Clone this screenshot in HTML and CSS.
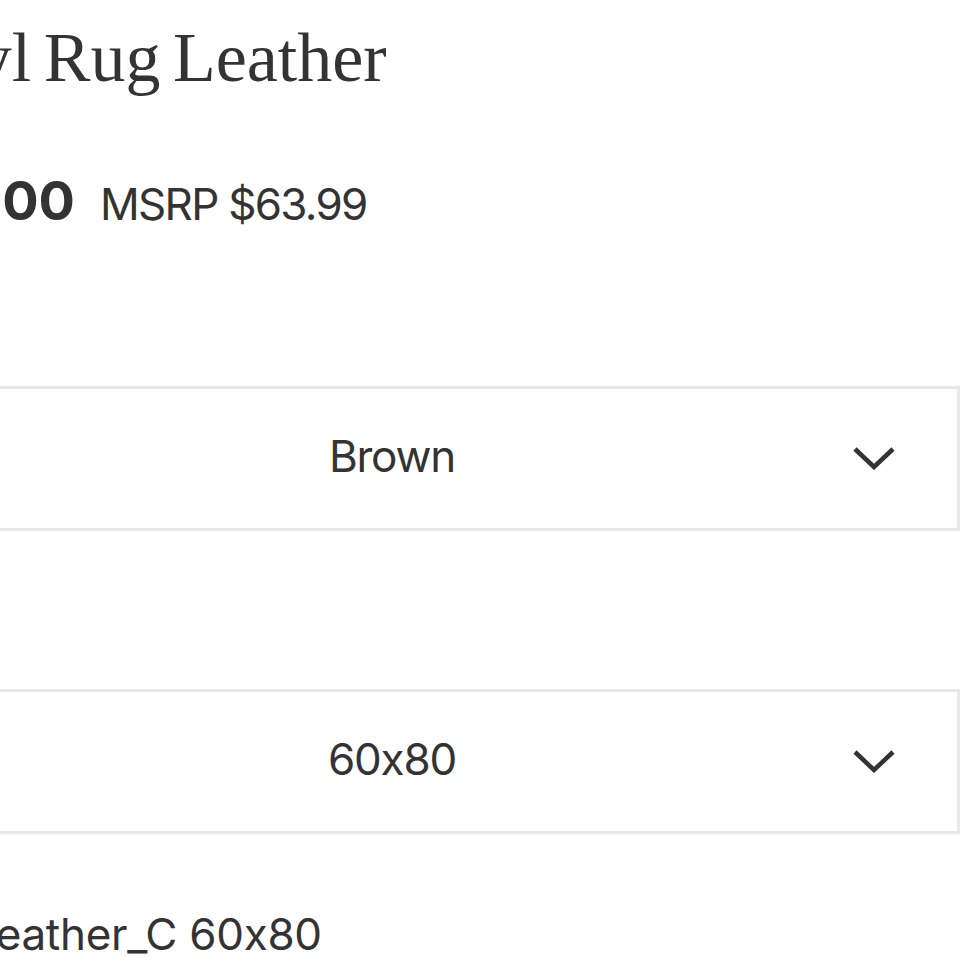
FILE: index.html
```html
<!DOCTYPE html>
<html lang="en">
<head>
<meta charset="utf-8">
<title>Vinyl Rug Leather</title>
<link rel="stylesheet" href="styles.css">
</head>
<body>
<main class="page">
  <h1 class="title">Vinyl Rug Leather</h1>
  <div class="price-row">
    <span class="price">$39.00</span>
    <span class="msrp">MSRP $63.99</span>
  </div>
  <div class="option">
    <div class="select">
      <span class="select-value">Brown</span>
      <svg class="chevron" viewBox="0 0 42 24" width="42" height="24" aria-hidden="true"><polyline points="2,3 21,21 40,3" fill="none" stroke="#333" stroke-width="4.5"/></svg>
    </div>
  </div>
  <div class="option option-second">
    <div class="select">
      <span class="select-value">60x80</span>
      <svg class="chevron" viewBox="0 0 42 24" width="42" height="24" aria-hidden="true"><polyline points="2,3 21,21 40,3" fill="none" stroke="#333" stroke-width="4.5"/></svg>
    </div>
  </div>
  <p class="sku">SKU: Leather_C 60x80</p>
</main>
</body>
</html>
```

FILE: styles.css
```css
html, body {
  margin: 0;
  padding: 0;
  background: #ffffff;
  overflow: hidden;
}

body {
  width: 970px;
  height: 970px;
  color: #333333;
  font-family: "Inter", "Liberation Sans", sans-serif;
  font-feature-settings: "calt" 0;
}

.page {
  margin-left: -176px;
  width: 1136px;
  display: flex;
  flex-direction: column;
}

.title {
  margin: 16px 0 0 0;
  padding-left: 52px;
  font-family: "Liberation Serif", serif;
  font-weight: 400;
  font-size: 70px;
  line-height: 84px;
  word-spacing: -5px;
  color: #333333;
  white-space: nowrap;
}

.price-row {
  margin-top: 71px;
  padding-left: 58px;
  display: flex;
  align-items: baseline;
  gap: 25px;
  height: 60px;
  line-height: 60px;
  white-space: nowrap;
}

.price {
  font-size: 54px;
  font-weight: 700;
}

.msrp {
  font-size: 44px;
  font-weight: 400;
  letter-spacing: -1.7px;
}

.option {
  margin-top: 155px;
}

.option-second {
  margin-top: 158px;
}

.select {
  box-sizing: border-box;
  height: 145px;
  border: 3px solid #e8e8e8;
  display: flex;
  align-items: center;
  justify-content: center;
  position: relative;
}

.select-value {
  font-size: 44px;
  line-height: 1;
  letter-spacing: -1.2px;
  padding-bottom: 5px;
}

.chevron {
  position: absolute;
  right: 62px;
  top: 50%;
  margin-top: -13px;
}

.sku {
  margin: 70px 0 0 0;
  padding-left: 33px;
  font-size: 44px;
  line-height: 60px;
  letter-spacing: -0.3px;
  white-space: nowrap;
}
```
